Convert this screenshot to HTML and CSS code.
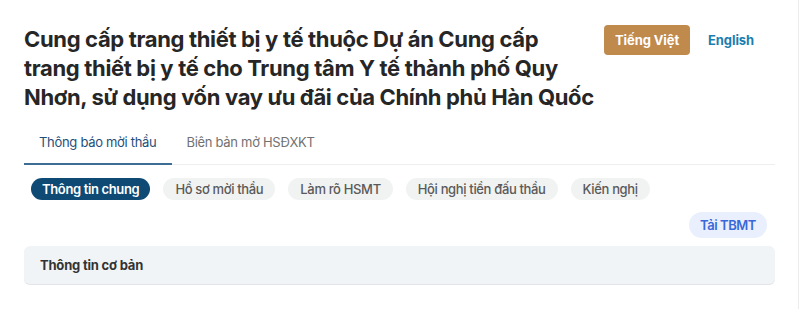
FILE: index.html
```html
<!DOCTYPE html>
<html lang="vi">
<head>
<meta charset="utf-8">
<link rel="stylesheet" href="styles.css">
</head>
<body>
<div class="page">
  <header class="header">
    <h1 class="title">Cung cấp trang thiết bị y tế thuộc Dự án Cung cấp<br>trang thiết bị y tế cho Trung tâm Y tế thành phố Quy<br>Nhơn, sử dụng vốn vay ưu đãi của Chính phủ Hàn Quốc</h1>
    <div class="langs">
      <button class="lang lang-active">Tiếng Việt</button>
      <button class="lang lang-link">English</button>
    </div>
  </header>
  <nav class="tabs">
    <div class="tab tab-active">Thông báo mời thầu</div>
    <div class="tab">Biên bản mở HSĐXKT</div>
  </nav>
  <div class="pills">
    <span class="pill pill-active">Thông tin chung</span>
    <span class="pill">Hồ sơ mời thầu</span>
    <span class="pill">Làm rõ HSMT</span>
    <span class="pill">Hội nghị tiền đấu thầu</span>
    <span class="pill">Kiến nghị</span>
  </div>
  <div class="actions">
    <button class="download">Tải TBMT</button>
  </div>
  <section class="section">
    <div class="section-head">Thông tin cơ bản</div>
  </section>
</div>
</body>
</html>
```

FILE: styles.css
```css
* { box-sizing: border-box; }
html, body { margin: 0; padding: 0; background: #fff; }
body {
  font-family: Inter, "Noto Sans", "Liberation Sans", sans-serif;
  color: #262626;
  width: 800px;
  height: 309px;
  overflow: hidden;
}
.page {
  width: 799px;
  height: 309px;
  border-right: 1px solid #ececec;
  padding: 25px 23px 0 24px;
}
.header {
  display: flex;
  justify-content: space-between;
  align-items: flex-start;
}
.title {
  margin: 0;
  width: 578px;
  flex-shrink: 0;
  font-size: 22px;
  line-height: 29px;
  font-weight: 700;
  color: #262626;
  letter-spacing: -0.34px;
  white-space: nowrap;
}
.langs {
  display: flex;
  align-items: center;
  margin-right: 5px;
}
.lang {
  font-family: inherit;
  font-size: 13px;
  font-weight: 700;
  height: 30px;
  border: none;
  border-radius: 4px;
  padding: 0 16px;
  letter-spacing: -0.1px;
  cursor: pointer;
}
.lang-active {
  background: #bf8a4c;
  color: #fff;
  width: 86px;
  padding: 0;
}
.lang-link {
  background: transparent;
  color: #1a7db0;
  margin-left: 2px;
}
.tabs {
  display: flex;
  margin-top: 8px;
  border-bottom: 1px solid #eeeeee;
}
.tab {
  padding: 12px 15px 11px;
  font-size: 13px;
  line-height: 20px;
  color: #717171;
  letter-spacing: -0.3px;
  border-bottom: 2px solid transparent;
  margin-bottom: -1px;
}
.tab-active {
  color: #1f4f7a;
  border-bottom-color: #3d6c95;
}
.pills {
  display: flex;
  gap: 13px;
  margin-top: 13px;
  padding-left: 7px;
}
.pill {
  height: 22px;
  line-height: 22px;
  padding: 0 12px;
  border-radius: 11px;
  font-size: 13px;
  font-weight: 500;
  letter-spacing: -0.35px;
  background: #f1f2f2;
  color: #5a5a5a;
}
.pill-active {
  background: #0e4a74;
  color: #fff;
  font-weight: 600;
  padding: 0 11px;
}
.actions {
  display: flex;
  justify-content: flex-end;
  margin-top: 12px;
  padding-right: 8px;
}
.download {
  font-family: inherit;
  height: 26px;
  padding: 0 11px;
  border: none;
  border-radius: 13px;
  background: #e9effd;
  color: #3a68d8;
  font-size: 13px;
  font-weight: 600;
  letter-spacing: -0.45px;
}
.section {
  margin-top: 8px;
  background: #f1f4f7;
  border-radius: 6px;
  box-shadow: 0 1px 0 #e2e4e8;
  height: 38px;
}
.section-head {
  padding: 0 16px;
  line-height: 38px;
  font-size: 13px;
  font-weight: 700;
  letter-spacing: -0.2px;
  color: #333;
}
```
